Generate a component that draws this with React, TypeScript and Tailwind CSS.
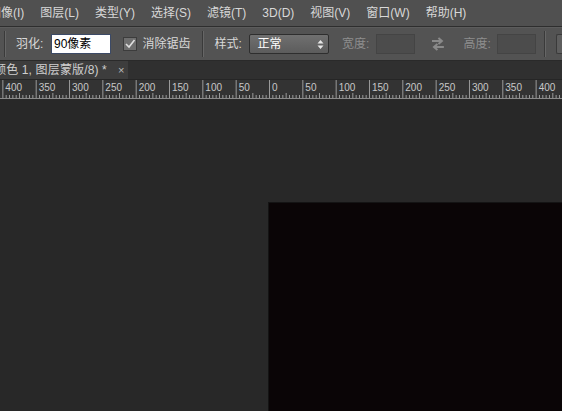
import React from 'react';

const font = { fontFamily: '"Liberation Sans", "Noto Sans CJK SC", sans-serif' };

const menus = ['图像(I)', '图层(L)', '类型(Y)', '选择(S)', '滤镜(T)', '3D(D)', '视图(V)', '窗口(W)', '帮助(H)'];

const Sep = () => (
  <div className="flex h-[26px] shrink-0">
    <div className="w-px bg-[#3a3a3a]" />
    <div className="w-px bg-[#666]" />
  </div>
);

const Ruler = () => {
  const zero = 269;
  const step = 33.33;
  const ticks: React.ReactNode[] = [];
  for (let i = -90; i <= 90; i++) {
    const x = zero + (i * step) / 10;
    if (x < -2 || x > 564) continue;
    const major = i % 10 === 0;
    const mid = i % 5 === 0;
    const h = major ? 18 : mid ? 5 : 3;
    ticks.push(<line key={i} x1={x + 0.5} x2={x + 0.5} y1={18 - h} y2={18} stroke="#9a9a9a" strokeWidth={1} />);
    if (major) {
      ticks.push(
        <text key={'t' + i} x={x + 3} y={11} fontSize={10} fill="#c8c8c8" style={font}>
          {Math.abs(i * 5)}
        </text>
      );
    }
  }
  return (
    <svg width={562} height={18} className="block">
      {ticks}
    </svg>
  );
};

export default function App() {
  return (
    <div className="w-[562px] h-[411px] overflow-hidden flex flex-col bg-[#282828] text-[12px]" style={font}>
      {/* menu bar */}
      <div className="h-[26px] bg-[#505050] flex items-center text-[#d8d8d8] shrink-0">
        <div className="flex gap-[16px] ml-[-11px]">
          {menus.map(m => (
            <span key={m} className="whitespace-nowrap">{m}</span>
          ))}
        </div>
      </div>
      <div className="h-px bg-[#2e2e2e] shrink-0" />
      <div className="h-px bg-[#5c5c5c] shrink-0" />
      {/* options bar */}
      <div className="h-[32px] bg-[#535353] flex items-center text-[#d8d8d8] shrink-0 pl-[4px]">
        <Sep />
        <span className="ml-[10px] w-[35px] shrink-0">羽化:</span>
        <div className="w-[61px] h-[20px] bg-white border border-[#3c4a66] flex items-center pl-[2px] text-black text-[12px]">
          90像素
        </div>
        <div className="ml-[12px] w-[14px] h-[14px] bg-[#6e6e6e] border border-[#3c3c3c] flex items-center justify-center">
          <svg width="12" height="12" viewBox="0 0 12 12">
            <path d="M2 6 L5 9 L10.5 2" fill="none" stroke="#e0e0e0" strokeWidth="1.6" />
          </svg>
        </div>
        <span className="ml-[5px] w-[48px] shrink-0">消除锯齿</span>
        <div className="ml-[12px]"><Sep /></div>
        <span className="ml-[10px] w-[35px] shrink-0">样式:</span>
        <div className="w-[80px] h-[20px] rounded-[2px] border border-[#2e2e2e] bg-gradient-to-b from-[#707070] to-[#5c5c5c] flex items-center justify-between pl-[7px] pr-[4px] text-white">
          <span>正常</span>
          <svg width="7" height="11" viewBox="0 0 7 11">
            <path d="M0.5 4.5 L3.5 1 L6.5 4.5 Z M0.5 6.5 L3.5 10 L6.5 6.5 Z" fill="#e8e8e8" />
          </svg>
        </div>
        <span className="ml-[13px] w-[34px] shrink-0 text-[#8e8e8e]">宽度:</span>
        <div className="w-[39px] h-[20px] bg-[#4c4c4c] border border-[#444]" />
        <svg className="ml-[15px]" width="16" height="14" viewBox="0 0 16 14">
          <path d="M2 4 H11 M8.5 1 L12 4 L8.5 7" fill="none" stroke="#8a8a8a" strokeWidth="2" />
          <path d="M14 10 H5 M7.5 7 L4 10 L7.5 13" fill="none" stroke="#8a8a8a" strokeWidth="2" />
        </svg>
        <span className="ml-[18px] w-[34px] shrink-0 text-[#8e8e8e]">高度:</span>
        <div className="w-[39px] h-[20px] bg-[#4c4c4c] border border-[#444]" />
        <div className="ml-[8px]"><Sep /></div>
        <div className="ml-[10px] w-[6px] h-[20px] border border-r-0 border-[#3a3a3a] bg-[#5e5e5e] rounded-l-[2px]" />
      </div>
      <div className="h-px bg-[#2a2a2a] shrink-0" />
      {/* tab bar */}
      <div className="h-[18px] bg-[#303030] flex shrink-0">
        <div className="w-[128px] bg-[#3d3d3d] flex items-center text-[#cfcfcf] text-[12px] whitespace-nowrap overflow-hidden">
          <span className="ml-[-6px] tracking-[0.15px]">颜色 1, 图层蒙版/8) *</span>
          <span className="ml-[11px] text-[11px] text-[#bbb]">×</span>
        </div>
      </div>
      <div className="h-px bg-[#262626] shrink-0" />
      {/* ruler */}
      <div className="h-[18px] bg-[#333333] shrink-0">
        <Ruler />
      </div>
      <div className="h-px bg-[#8a8a8a] shrink-0" />
      {/* canvas */}
      <div className="flex-1 flex flex-col pt-[103px] pl-[268px]">
        <div className="flex-1 bg-[#0a0506] border-t border-l border-[#141414]" />
      </div>
    </div>
  );
}
